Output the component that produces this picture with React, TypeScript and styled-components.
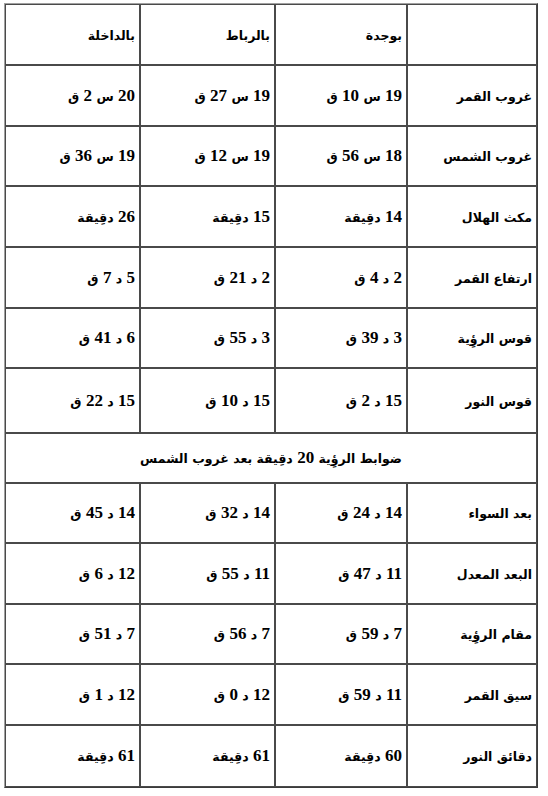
import React from "react";
import styled, { createGlobalStyle } from "styled-components";

const Global = createGlobalStyle`
  html, body { margin: 0; padding: 0; background: #ffffff; }
  body { font-family: "Liberation Serif", "DejaVu Sans", serif; color: #000; }
`;

const Page = styled.div`
  padding: 3px 0 0 4px;
  width: 534px;
`;

const Table = styled.table`
  direction: rtl;
  width: 534px;
  table-layout: fixed;
  border-collapse: separate;
  border-spacing: 0;
  border: 1px solid;
  border-color: #a0a0a0 #3c3c3c #3c3c3c #a0a0a0;
`;

const Row = styled.tr<{ $h: number }>`
  height: ${(p) => p.$h}px;
`;

const Cell = styled.td<{ $center?: boolean }>`
  border: 1px solid #4a4a4a;
  padding: 0 4px 0 4px;
  text-align: ${(p) => (p.$center ? "center" : "right")};
  vertical-align: middle;
  font-weight: bold;
  white-space: nowrap;
  overflow: hidden;
`;

const Num = styled.span`
  font-family: "Liberation Serif", serif;
  font-size: 17px;
  font-weight: bold;
`;

const Ar = styled.span`
  font-family: "DejaVu Sans", sans-serif;
  font-size: 12.5px;
  font-weight: bold;
`;

const Label = styled.span`
  font-family: "DejaVu Sans", sans-serif;
  font-size: 12.5px;
  font-weight: bold;
`;

function Mixed({ text }: { text: string }) {
  const parts = text.split(/(\d+)/).filter((s) => s.length > 0);
  return (
    <>
      {parts.map((p, i) =>
        /^\d+$/.test(p) ? <Num key={i}>{p}</Num> : <Ar key={i}>{p}</Ar>
      )}
    </>
  );
}

type RowData = { label: string; values: string[]; h: number };

const top: RowData[] = [
  { label: "غروب القمر", values: ["19 س 10 ق", "19 س 27 ق", "20 س 2 ق"], h: 61 },
  { label: "غروب الشمس", values: ["18 س 56 ق", "19 س 12 ق", "19 س 36 ق"], h: 60 },
  { label: "مكث الهلال", values: ["14 دقِيقة", "15 دقِيقة", "26 دقِيقة"], h: 61 },
  { label: "ارتفاع القمر", values: ["2 د 4 ق", "2 د 21 ق", "5 د 7 ق"], h: 61 },
  { label: "قوس الرؤِية", values: ["3 د 39 ق", "3 د 55 ق", "6 د 41 ق"], h: 60 },
  { label: "قوس النور", values: ["15 د 2 ق", "15 د 10 ق", "15 د 22 ق"], h: 65 },
];

const bottom: RowData[] = [
  { label: "بعد السواء", values: ["14 د 24 ق", "14 د 32 ق", "14 د 45 ق"], h: 60 },
  { label: "البعد المعدل", values: ["11 د 47 ق", "11 د 55 ق", "12 د 6 ق"], h: 61 },
  { label: "مقام الرؤِية", values: ["7 د 59 ق", "7 د 56 ق", "7 د 51 ق"], h: 60 },
  { label: "سيق القمر", values: ["11 د 59 ق", "12 د 0 ق", "12 د 1 ق"], h: 61 },
  { label: "دقائق النور", values: ["60 دقِيقة", "61 دقِيقة", "61 دقِيقة"], h: 62 },
];

function DataRow({ r }: { r: RowData }) {
  return (
    <Row $h={r.h}>
      <Cell>
        <Label>{r.label}</Label>
      </Cell>
      {r.values.map((v, i) => (
        <Cell key={i}>
          <Mixed text={v} />
        </Cell>
      ))}
    </Row>
  );
}

export default function App() {
  return (
    <>
      <Global />
      <Page>
        <Table>
          <colgroup>
            <col style={{ width: 130 }} />
            <col style={{ width: 132 }} />
            <col style={{ width: 135 }} />
            <col style={{ width: 135 }} />
          </colgroup>
          <tbody>
            <Row $h={61}>
              <Cell />
              <Cell>
                <Label>بوجدة</Label>
              </Cell>
              <Cell>
                <Label>بالرباط</Label>
              </Cell>
              <Cell>
                <Label>بالداخلة</Label>
              </Cell>
            </Row>
            {top.map((r, i) => (
              <DataRow key={i} r={r} />
            ))}
            <Row $h={50}>
              <Cell colSpan={4} $center>
                <Mixed text="ضوابط الرؤِية 20 دقِيقة بعد غروب الشمس" />
              </Cell>
            </Row>
            {bottom.map((r, i) => (
              <DataRow key={i} r={r} />
            ))}
          </tbody>
        </Table>
      </Page>
    </>
  );
}
